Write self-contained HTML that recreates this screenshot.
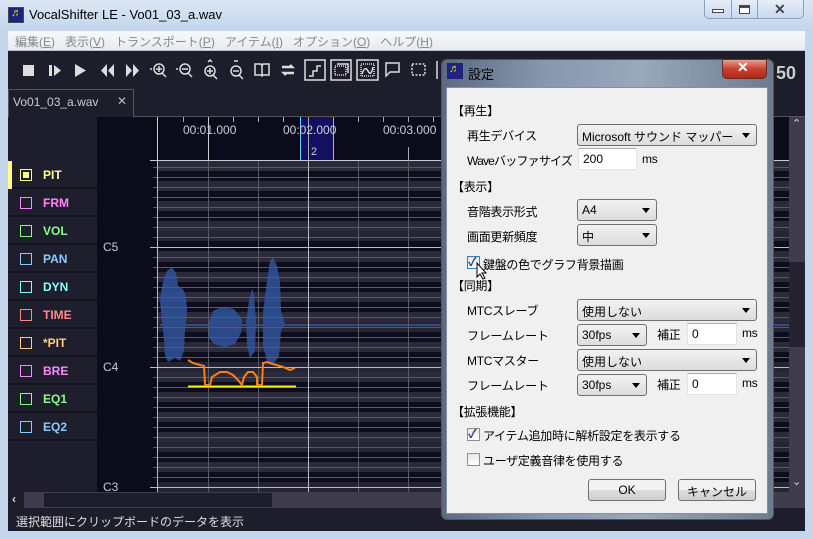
<!DOCTYPE html>
<html><head><meta charset="utf-8">
<style>
*{margin:0;padding:0;box-sizing:border-box}
body{width:813px;height:539px;overflow:hidden;position:relative;background:#c5d6ec;font-family:"Liberation Sans","Noto Sans CJK JP",sans-serif;font-size:12px}
.abs{position:absolute}
.t{position:absolute;white-space:nowrap}
.trk{position:absolute;left:8px;width:89px;height:28px;background:#1f1e2c;border-bottom:2px solid #14131e}
.trk .b{position:absolute;left:12px;top:8px;width:12px;height:12px;border:1px solid}
.trk span{position:absolute;left:35px;top:7px;font-weight:bold;font-size:12px}
.dl{position:absolute;font-size:12px;color:#000;white-space:nowrap;letter-spacing:-0.3px}
.cb{position:absolute;height:22px;border:1px solid #707070;border-radius:3px;background:linear-gradient(#f2f2f2,#dcdcdc);font-size:12px;padding:3px 0 0 4px;color:#000}
.cb:after{content:"";position:absolute;right:6px;top:8px;border-left:4px solid transparent;border-right:4px solid transparent;border-top:5px solid #000}
.in{position:absolute;height:22px;background:#fff;border:1px solid #e3e3e3;border-top-color:#abadb3;font-size:12px;padding:3px 0 0 4px}
.chk{position:absolute;width:13px;height:13px;border:1px solid #8f8f8f;background:linear-gradient(#e6e6e6,#fff)}
.btn{position:absolute;height:22px;border:1px solid #707070;border-radius:3px;background:linear-gradient(#f2f2f2 50%,#dddddd 50%,#cfcfcf);text-align:center;padding-top:3px;font-size:12px}
</style></head><body>
<!-- title -->
<div class="abs" style="left:0;top:0;width:813px;height:31px;background:linear-gradient(#dbe7f5,#c3d5ec)"></div>
<div class="abs" style="left:8px;top:7px;width:16px;height:16px;background:#1c2480;border:1px solid #445"></div>
<div class="t" style="left:11px;top:7px;color:#e8c020;font-size:11px">♬</div>
<div class="t" style="left:29px;top:7px;font-size:13px;color:#000">VocalShifter LE - Vo01_03_a.wav</div>
<div class="abs" style="left:704px;top:0;width:100px;height:19px;border:1px solid #8aa0c0;border-top:none;border-radius:0 0 5px 5px;background:linear-gradient(#e6eef8,#c9d8ec)"></div>
<div class="abs" style="left:731px;top:0;width:1px;height:19px;background:#8aa0c0"></div>
<div class="abs" style="left:757px;top:0;width:1px;height:19px;background:#8aa0c0"></div>
<div class="abs" style="left:712px;top:9px;width:12px;height:4px;border:1px solid #445;background:#fff"></div>
<div class="abs" style="left:739px;top:5px;width:11px;height:9px;border:1px solid #445;border-top-width:3px;background:#fff"></div>
<div class="t" style="left:774px;top:1px;font-size:14px;font-weight:bold;color:#445">✕</div>
<!-- menu -->
<div class="abs" style="left:8px;top:31px;width:797px;height:20px;background:linear-gradient(#f8f9fb,#e6eaf0);border-bottom:1px solid #b8c4d4"></div>
<div class="t" style="left:15px;top:33px;color:#888;font-size:12px">編集(<u>E</u>)&nbsp;&nbsp; 表示(<u>V</u>)&nbsp;&nbsp; トランスポート(<u>P</u>)&nbsp;&nbsp; アイテム(<u>I</u>)&nbsp;&nbsp; オプション(<u>O</u>)&nbsp;&nbsp; ヘルプ(<u>H</u>)</div>
<!-- toolbar -->
<div class="abs" style="left:8px;top:51px;width:797px;height:38px;background:#1e1d2b"></div>
<svg class="abs" style="left:8px;top:51px" width="440" height="38" viewBox="8 51 440 38" fill="none" stroke="#ddd" stroke-width="1.5">
<rect x="23" y="65" width="11" height="11" fill="#ddd" stroke="none"/>
<rect x="49" y="65" width="3" height="11" fill="#ddd" stroke="none"/><path d="M54 65l7 5.5-7 5.5z" fill="#ddd" stroke="none"/>
<path d="M75 64l11 6.5-11 6.5z" fill="#ddd" stroke="none"/>
<path d="M107 64l-6 6.5 6 6.5zM114 64l-6 6.5 6 6.5z" fill="#ddd" stroke="none"/>
<path d="M126 64l6 6.5-6 6.5zM133 64l6 6.5-6 6.5z" fill="#ddd" stroke="none"/>
<circle cx="159" cy="69" r="5"/><path d="M162 73l4 4M156 69h6M159 66v6M150 69h2"/>
<circle cx="185" cy="69" r="5"/><path d="M188 73l4 4M182 69h6M176 69h2"/>
<circle cx="210" cy="71" r="5"/><path d="M213 75l4 4M207 71h6M210 68v6M208 62l2-2 2 2"/>
<circle cx="236" cy="71" r="5"/><path d="M239 75l4 4M233 71h6M234 61h4"/>
<path d="M255 64h6l1 2 1-2h6v11h-6l-1 1-1-1h-6zM262 66v9"/>
<path d="M282 67h10l-2-2M294 73h-10l2 2" stroke-width="2.5"/>
<rect x="305" y="60" width="20" height="20"/><path d="M309 76h4v-5h4v-5h4"/>
<rect x="331" y="60" width="20" height="20"/><rect x="335" y="66" width="11" height="9" stroke-dasharray="1 1"/><path d="M337 64h11v9"/>
<rect x="357" y="60" width="21" height="20"/><rect x="361" y="64" width="13" height="12" stroke-dasharray="1 1"/><path d="M362 74q3-9 6-3t5-4"/>
<path d="M386 63h13v9h-9l-4 4z"/>
<rect x="412" y="64" width="13" height="11" stroke-dasharray="2 1.5"/>
<path d="M437 61v18"/>
</svg>
<div class="t" style="left:776px;top:63px;color:#ccc;font-size:18px;font-weight:bold">50</div>
<!-- tab row -->
<div class="abs" style="left:8px;top:89px;width:797px;height:28px;background:#1e1d2b;border-bottom:1px solid #555"></div>
<div class="abs" style="left:8px;top:89px;width:126px;height:29px;background:#1e1d2b;border:1px solid #555;border-bottom:none"></div>
<div class="t" style="left:13px;top:95px;color:#ccc;font-size:12px">Vo01_03_a.wav</div>
<div class="t" style="left:117px;top:94px;color:#bbb;font-size:12px">✕</div>
<!-- left column + keys -->
<div class="abs" style="left:8px;top:117px;width:89px;height:375px;background:#1e1d2b"></div>
<div class="abs" style="left:97px;top:117px;width:60px;height:375px;background:#0b0b1b"></div>
<div class="abs" style="left:157px;top:117px;width:633px;height:44px;background:#0b0b1b"></div>
<div class="abs" style="left:300px;top:117px;width:34px;height:44px;background:#141060;border-left:1px solid #6cf;border-right:1px solid #6cf"></div>
<!-- ruler -->
<svg class="abs" style="left:150px;top:117px" width="640" height="45" fill="none" stroke="#aaa">
<path d="M7.5 0v45M58.5 0v45M0 43.5h640" stroke="#ccc"/>
<path d="M33.5 0v5M83.5 0v5M108.5 0v5M133.5 0v5M183.5 0v5M208.5 0v5M233.5 0v5M258.5 0v5M283.5 0v5M308.5 0v5M333.5 0v5M358.5 0v5M383.5 0v5M408.5 0v5M433.5 0v5M458.5 0v5M483.5 0v5M508.5 0v5M533.5 0v5M558.5 0v5M583.5 0v5M608.5 0v5M158.5 0v45M258.5 30v14M358.5 30v14M458.5 30v14"/>
</svg>
<div class="t" style="left:183px;top:123px;color:#ccd;font-size:12px">00:01.000</div>
<div class="t" style="left:283px;top:123px;color:#ccd;font-size:12px">00:02.000</div>
<div class="t" style="left:383px;top:123px;color:#ccd;font-size:12px">00:03.000</div>
<div class="t" style="left:311px;top:146px;color:#ccd;font-size:11px">2</div>
<!-- grid -->
<div class="abs" style="left:157px;top:161px;width:633px;height:331px;background:repeating-linear-gradient(#2b2a3b 0 10px,#0e0d1e 10px 20px,#2b2a3b 20px 30px,#0e0d1e 30px 40px,#2b2a3b 40px 50px,#0e0d1e 50px 60px,#2b2a3b 60px 70px,#252435 70px 80px,#0e0d1e 80px 90px,#2b2a3b 90px 100px,#0e0d1e 100px 110px,#252435 110px 120px);background-position:0 91px"></div>
<svg class="abs" style="left:150px;top:161px" width="640" height="331" fill="none">
<!-- waveform -->
<g fill="#2f4f95" stroke="none" opacity="0.9">
<path d="M12 160L10 140 12 125 14 118 17 110 22 106 26 112 28 125 33 128 36 135 37 150 35 170 34 190 30 200 25 197 18 201 15 195 14 180Z"/>
<path d="M58 165L63 150 72 146 84 148 92 158 91 172 85 183 75 186 64 183 58 176Z"/>
<path d="M96 160L99 140 102 128 104 133 106 160 105 190 100 197 97 185Z"/>
<path d="M113 150L117 120 120 100 123 96 127 105 130 120 131 150 135 163 131 170 129 195 124 202 117 200 113 185Z"/>
<rect x="10" y="163" width="630" height="2"/>
</g>
<g stroke="#5a5a62">
<path d="M3 6.5h637M3 16.5h637M3 26.5h637M3 36.5h637M3 46.5h637M3 56.5h637M3 66.5h637M3 76.5h637M3 96.5h637M3 106.5h637M3 116.5h637M3 126.5h637M3 136.5h637M3 146.5h637M3 156.5h637M3 166.5h637M3 176.5h637M3 186.5h637M3 196.5h637M3 216.5h637M3 226.5h637M3 236.5h637M3 246.5h637M3 256.5h637M3 266.5h637M3 276.5h637M3 286.5h637M3 296.5h637M3 306.5h637M3 316.5h637"/>
<path d="M58.5 0v331M108.5 0v331M208.5 0v331M258.5 0v331M358.5 0v331M408.5 0v331M458.5 0v331M558.5 0v331M608.5 0v331"/>
</g>
<path d="M0 86.5h640M0 206.5h640M0 326.5h640M7.5 0v331M158.5 0v331" stroke="#bbb"/>
<path d="M38 225.5h108" stroke="#ffee00" stroke-width="2"/>
<path d="M38 199L43 202 50 204 54 205 55 224 60 224 62 216 70 211 77 211 83 214 88 219 92 224 94 216 98 211 103 211 107 216 107 224 112 224 113 202 117 201 123 203 133 206 140 209 145 207" stroke="#ff7f10" stroke-width="2"/>
</svg>
<div class="t" style="left:103px;top:240px;color:#ccc;font-size:12px">C5</div>
<div class="t" style="left:103px;top:360px;color:#ccc;font-size:12px">C4</div>
<div class="t" style="left:103px;top:480px;color:#ccc;font-size:12px">C3</div>
<!-- tracks -->
<div class="abs" style="left:8px;top:161px;width:89px;height:331px;background:#1e1d2b"></div>
<div class="trk" style="top:161px"><div class="b" style="border-color:#ff8;background:#1e1d2b"><div style="margin:2px;width:6px;height:6px;background:#ff8"></div></div><span style="color:#ff8">PIT</span></div>
<div class="abs" style="left:8px;top:161px;width:4px;height:28px;background:#ff8"></div>
<div class="trk" style="top:189px"><div class="b" style="border-color:#f8f"></div><span style="color:#f8f">FRM</span></div>
<div class="trk" style="top:217px"><div class="b" style="border-color:#8f8"></div><span style="color:#8f8">VOL</span></div>
<div class="trk" style="top:245px"><div class="b" style="border-color:#8cf"></div><span style="color:#8cf">PAN</span></div>
<div class="trk" style="top:273px"><div class="b" style="border-color:#8ff"></div><span style="color:#8ff">DYN</span></div>
<div class="trk" style="top:301px"><div class="b" style="border-color:#f88"></div><span style="color:#f88">TIME</span></div>
<div class="trk" style="top:329px"><div class="b" style="border-color:#fc8"></div><span style="color:#fc8">*PIT</span></div>
<div class="trk" style="top:357px"><div class="b" style="border-color:#f8f"></div><span style="color:#f8f">BRE</span></div>
<div class="trk" style="top:385px"><div class="b" style="border-color:#8f8"></div><span style="color:#8f8">EQ1</span></div>
<div class="trk" style="top:413px"><div class="b" style="border-color:#8cf"></div><span style="color:#8cf">EQ2</span></div>
<!-- v scrollbar -->
<div class="abs" style="left:789px;top:117px;width:16px;height:375px;background:#3e3c4e"></div>
<div class="abs" style="left:789px;top:262px;width:16px;height:85px;background:#24232f"></div>
<div class="t" style="left:792px;top:117px;color:#ddd;font-size:11px">⌃</div>
<div class="t" style="left:792px;top:475px;color:#ddd;font-size:11px">⌄</div>
<!-- h scrollbar -->
<div class="abs" style="left:8px;top:492px;width:797px;height:16px;background:#3e3c4e"></div>
<div class="abs" style="left:8px;top:492px;width:16px;height:16px;background:#1e1d2b;color:#ddd;font-size:12px;font-weight:bold;padding-left:4px">‹</div>
<div class="abs" style="left:44px;top:493px;width:228px;height:14px;background:#1e1d2b"></div>
<!-- status -->
<div class="abs" style="left:8px;top:508px;width:797px;height:23px;background:#1e1d2b"></div>
<div class="t" style="left:16px;top:513px;color:#ddd;font-size:12px">選択範囲にクリップボードのデータを表示</div>
<!-- dialog -->
<div class="abs" style="left:441px;top:59px;width:333px;height:461px;border:1px solid #555;border-radius:6px;background:linear-gradient(90deg,#5b6a80,#8696ad 30%,#9aa8bb 60%,#6d7b90)"></div>
<div class="abs" style="left:447px;top:63px;width:16px;height:16px;background:#1c2480"></div>
<div class="t" style="left:449px;top:63px;color:#e8c020;font-size:11px">♬</div>
<div class="t" style="left:468px;top:64px;color:#000;font-size:13px">設定</div>
<div class="abs" style="left:722px;top:59px;width:45px;height:20px;border:1px solid #6a2a20;border-radius:0 0 5px 5px;background:linear-gradient(#e8a090,#c84030 50%,#b02818)"></div>
<div class="t" style="left:737px;top:59px;color:#fff;font-size:14px;font-weight:bold">✕</div>
<div class="abs" style="left:446px;top:87px;width:322px;height:427px;background:#f0f0f0;border:1px solid #8090a8"></div>
<div class="dl" style="left:452px;top:102px">【再生】</div>
<div class="dl" style="left:467px;top:127px">再生デバイス</div>
<div class="cb" style="left:577px;top:124px;width:180px">Microsoft サウンド マッパー</div>
<div class="dl" style="left:467px;top:152px;letter-spacing:-0.8px">Waveバッファサイズ</div>
<div class="in" style="left:578px;top:148px;width:59px">200</div>
<div class="dl" style="left:642px;top:152px">ms</div>
<div class="dl" style="left:452px;top:178px">【表示】</div>
<div class="dl" style="left:467px;top:203px">音階表示形式</div>
<div class="cb" style="left:577px;top:199px;width:80px">A4</div>
<div class="dl" style="left:467px;top:228px">画面更新頻度</div>
<div class="cb" style="left:577px;top:224px;width:80px">中</div>
<div class="chk" style="left:467px;top:256px;border-color:#3c7fb1"></div>
<div class="t" style="left:468px;top:253px;color:#2a3a8a;font-size:12px;font-weight:bold">✓</div>
<div class="dl" style="left:483px;top:256px">鍵盤の色でグラフ背景描画</div>
<svg class="abs" style="left:476px;top:262px" width="12" height="18"><path d="M1 1v14l3-3 3 5 2-1-3-5h4z" fill="#fff" stroke="#000"/></svg>
<div class="dl" style="left:452px;top:277px">【同期】</div>
<div class="dl" style="left:467px;top:302px">MTCスレーブ</div>
<div class="cb" style="left:577px;top:299px;width:180px">使用しない</div>
<div class="dl" style="left:467px;top:327px">フレームレート</div>
<div class="cb" style="left:577px;top:324px;width:70px">30fps</div>
<div class="dl" style="left:657px;top:326px">補正</div>
<div class="in" style="left:687px;top:323px;width:50px">0</div>
<div class="dl" style="left:742px;top:326px">ms</div>
<div class="dl" style="left:467px;top:352px">MTCマスター</div>
<div class="cb" style="left:577px;top:349px;width:180px">使用しない</div>
<div class="dl" style="left:467px;top:377px">フレームレート</div>
<div class="cb" style="left:577px;top:374px;width:70px">30fps</div>
<div class="dl" style="left:657px;top:376px">補正</div>
<div class="in" style="left:687px;top:373px;width:50px">0</div>
<div class="dl" style="left:742px;top:376px">ms</div>
<div class="dl" style="left:452px;top:403px">【拡張機能】</div>
<div class="chk" style="left:467px;top:428px"></div>
<div class="t" style="left:468px;top:425px;color:#2a3a8a;font-size:12px;font-weight:bold">✓</div>
<div class="dl" style="left:483px;top:427px">アイテム追加時に解析設定を表示する</div>
<div class="chk" style="left:467px;top:453px"></div>
<div class="dl" style="left:483px;top:452px">ユーザ定義音律を使用する</div>
<div class="btn" style="left:588px;top:479px;width:78px">OK</div>
<div class="btn" style="left:678px;top:479px;width:78px">キャンセル</div>
</body></html>
